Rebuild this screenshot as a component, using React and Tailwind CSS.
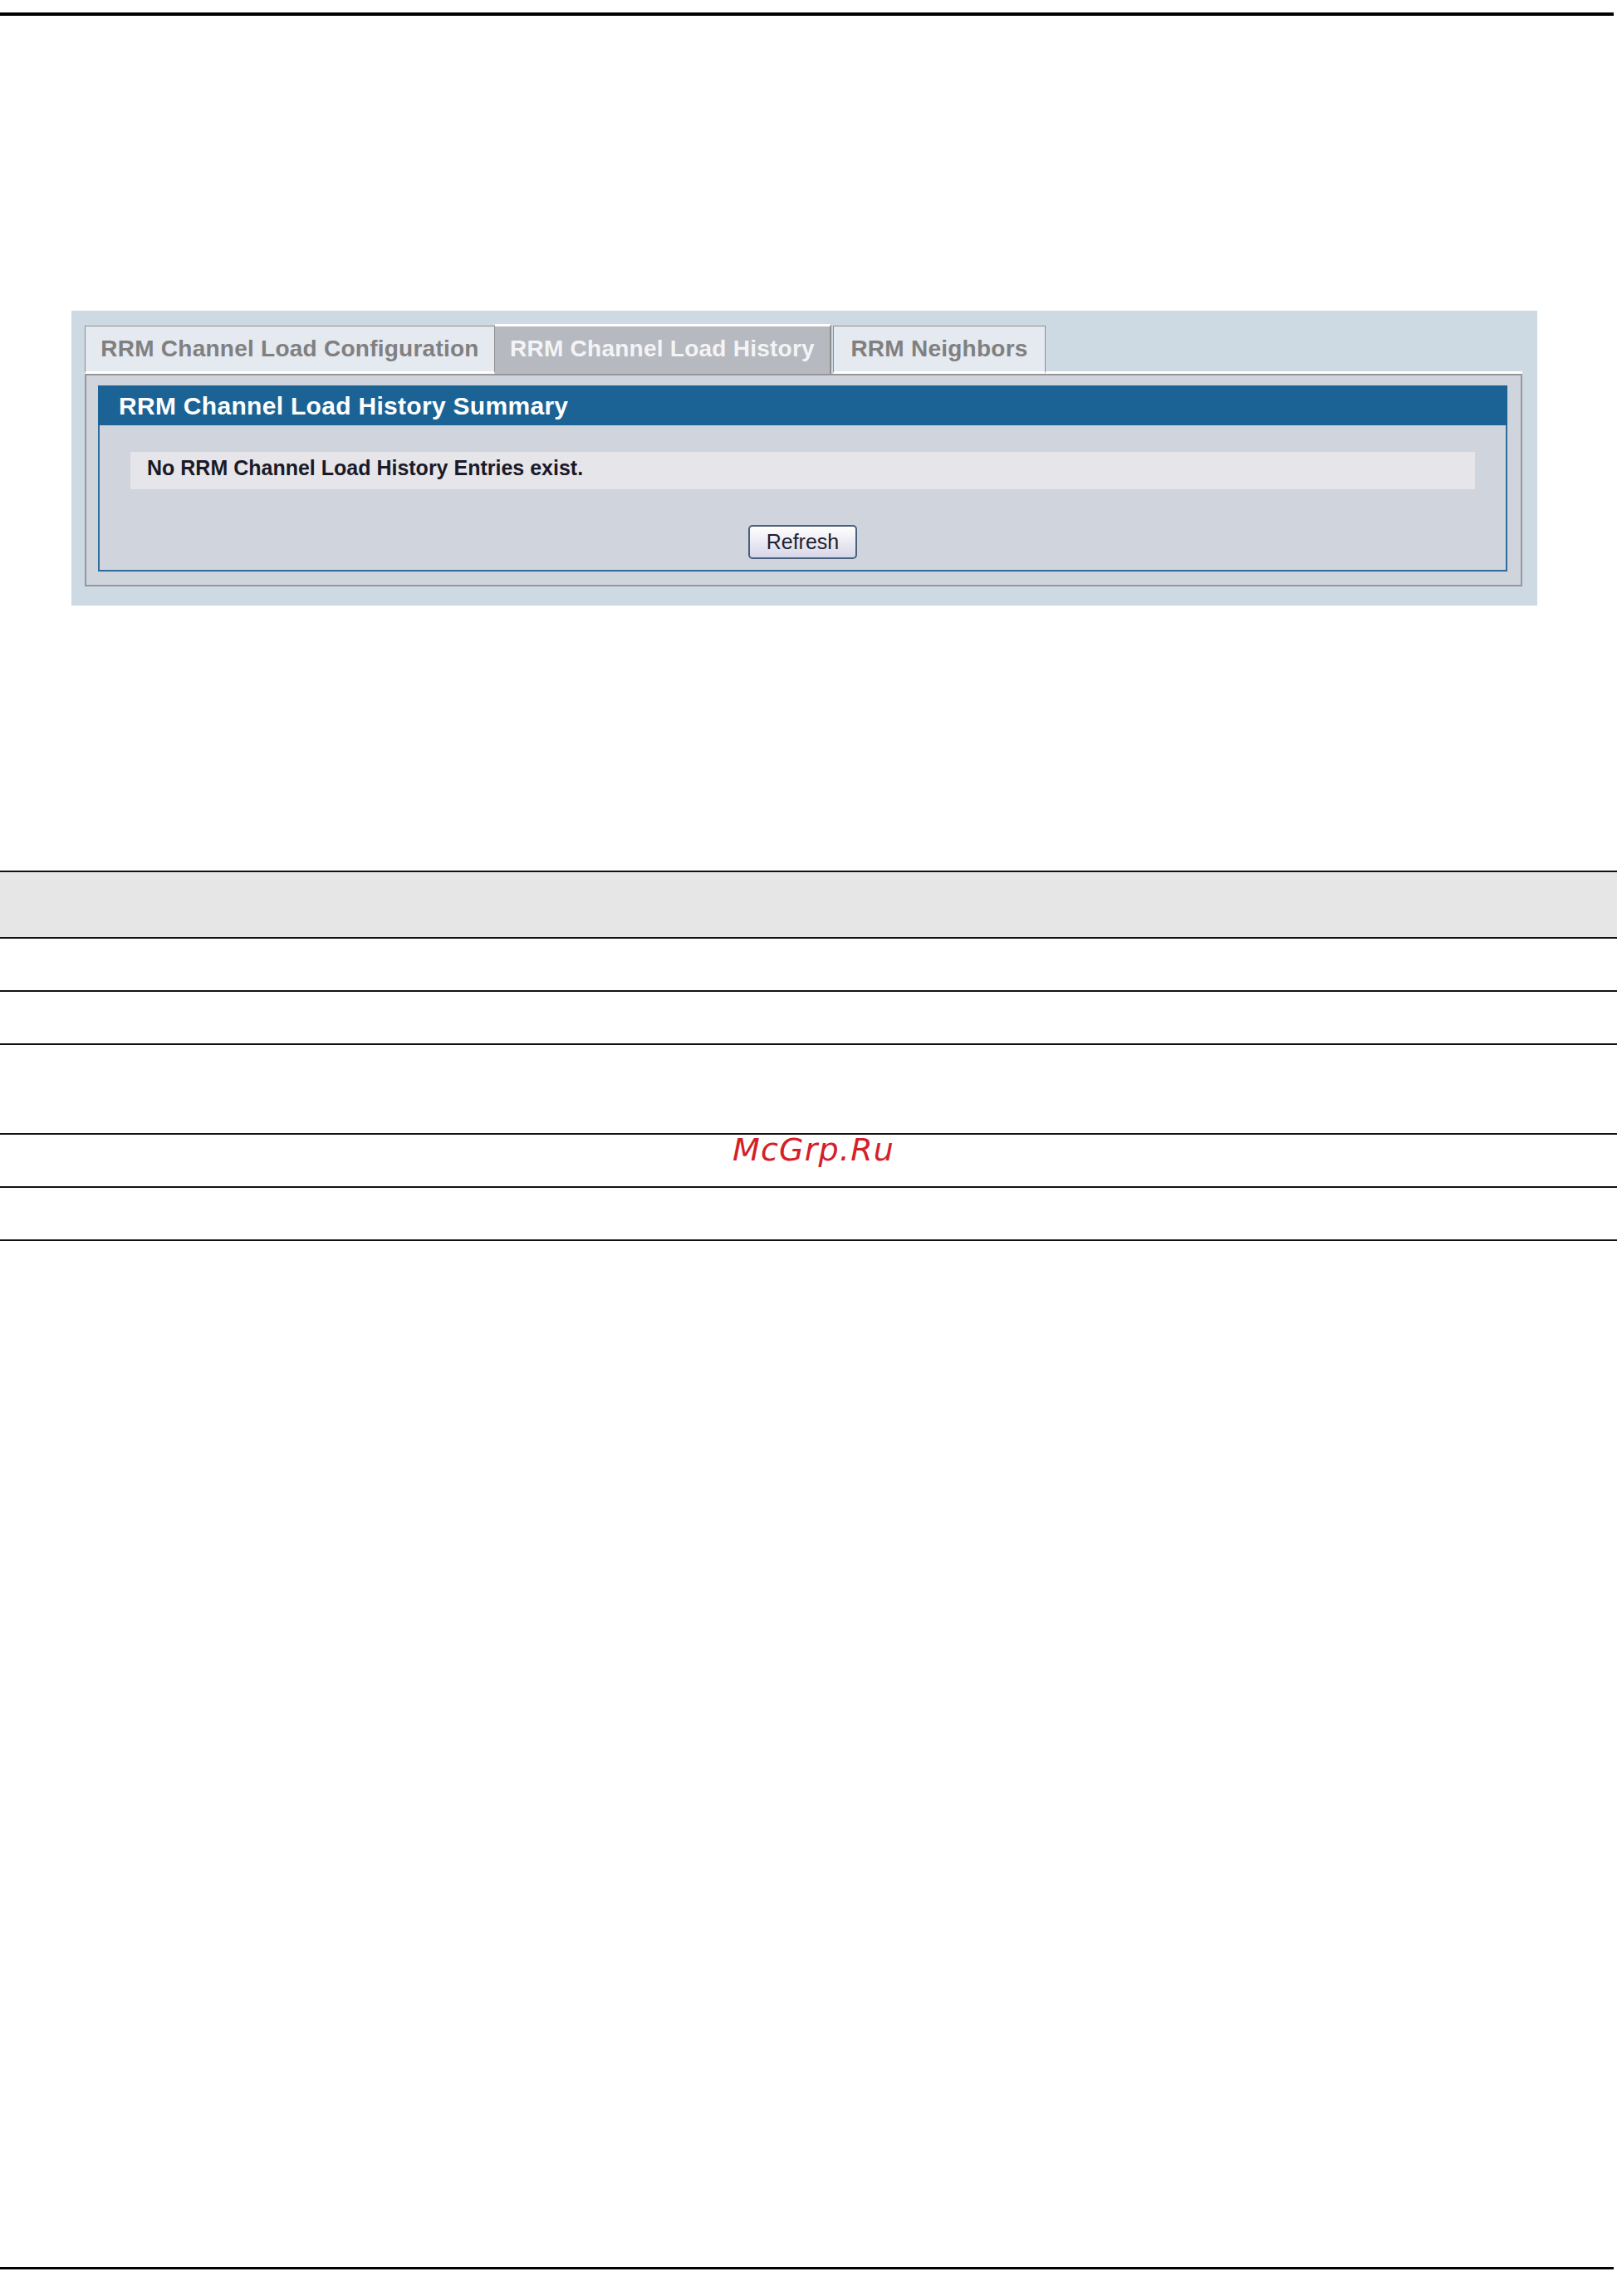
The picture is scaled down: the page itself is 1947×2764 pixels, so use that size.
export default function App() {
  const ui = { fontFamily: '"Liberation Sans", Arial, sans-serif' };
  return (
    <div className="w-[1947px] h-[2764px] bg-white flex flex-col" style={ui}>
      <div className="mt-[15px] h-[4px] w-[1943px] bg-black" />

      {/* Panel */}
      <div className="mt-[355px] ml-[86px] w-[1765px] bg-[#cddae4] pt-[16px] pl-[16px] pr-[18px] pb-[23px]">
        {/* Tabs */}
        <div className="flex items-end h-[60px]">
          <div className="w-[494px] h-[58px] bg-[#e5e9f0] border-t border-l border-r border-[#8e8e8e] border-b-[3px] border-b-white flex items-center justify-center text-[28px] font-bold text-[#808080] tracking-[0.25px]">
            RRM Channel Load Configuration
          </div>
          <div className="w-[405px] h-[60px] bg-[#b6b9c0] border-t-[3px] border-t-white border-r-2 border-r-[#8e8e8e] pb-[3px] flex items-center justify-center text-[28px] font-bold text-[#f4f4f6] tracking-[0.25px]">
            RRM Channel Load History
          </div>
          <div className="w-[256px] h-[58px] ml-[2px] bg-[#e5e9f0] border-t border-r border-l border-[#8e8e8e] border-b-[3px] border-b-white flex items-center justify-center text-[28px] font-bold text-[#808080] tracking-[0.25px]">
            RRM Neighbors
          </div>
          <div className="flex-1 h-[3px] bg-white" />
        </div>

        {/* Outer box */}
        <div className="border-2 border-[#979799] bg-[#cfd4dd] pt-[12px] pl-[14px] pr-[16px] pb-[16px]">
          {/* Inner box */}
          <div className="flex flex-col">
            <div className="h-[48px] bg-[#1b6395] flex items-center pl-[25px] text-[30px] font-bold text-white tracking-[0.3px]">
              RRM Channel Load History Summary
            </div>
            <div className="border-l-2 border-r-2 border-b-2 border-[#2e6c9c] bg-[#cfd4dd] pt-[32px] px-[37px] pb-[13px] flex flex-col">
              <div className="h-[45px] bg-[#e6e5ea] flex items-center pl-[20px] pb-[6px] text-[25px] font-bold text-[#1a1a28]">
                No RRM Channel Load History Entries exist.
              </div>
              <div className="mt-[43px] flex justify-center">
                <button className="w-[131px] h-[41px] rounded-[5px] border-2 border-[#48617f] bg-gradient-to-b from-white to-[#d6d6e8] text-[25px] text-[#1f1f2f] flex items-center justify-center">
                  Refresh
                </button>
              </div>
            </div>
          </div>
        </div>
      </div>

      {/* Table */}
      <div className="mt-[319px] w-[1947px] flex flex-col">
        <div className="h-[82px] bg-[#e6e6e6] border-t-2 border-b-2 border-[#111]" />
        <div className="h-[64px] border-b-2 border-[#111]" />
        <div className="h-[64px] border-b-2 border-[#111]" />
        <div className="h-[108px] border-b-2 border-[#111]" />
        <div className="h-[64px] border-b-2 border-[#111] flex items-start">
          <span
            className="ml-[882px] -mt-[1px] text-[38px] leading-[38px] italic text-[#d42027] tracking-[1.2px]"
            style={{ fontFamily: '"DejaVu Sans", sans-serif' }}
          >
            McGrp.Ru
          </span>
        </div>
        <div className="h-[64px] border-b-2 border-[#111]" />
      </div>

      <div className="mt-[1235px] h-[3px] w-[1943px] bg-black" />
    </div>
  );
}
